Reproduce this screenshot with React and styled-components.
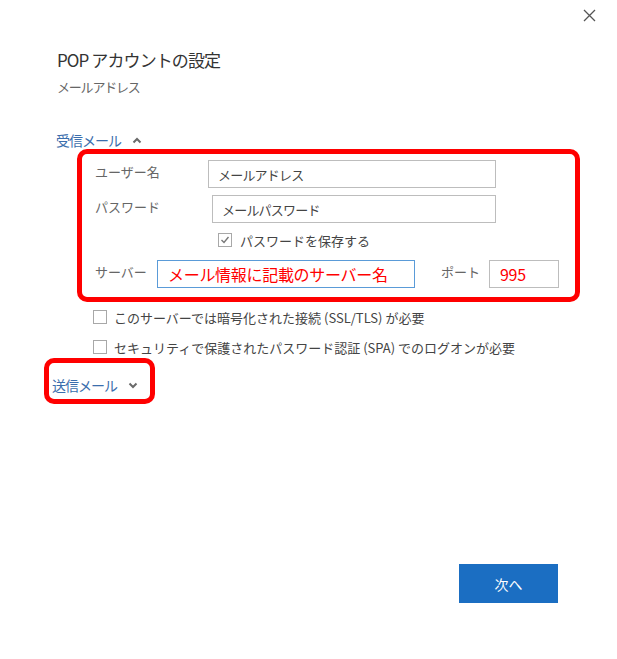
import styled, { createGlobalStyle } from "styled-components";

const GlobalStyle = createGlobalStyle`
  html, body {
    margin: 0;
    padding: 0;
    background: #fff;
  }
  body {
    font-family: "Noto Sans CJK JP", "Noto Sans", sans-serif;
    color: #333;
  }
`;

const Dialog = styled.div`
  width: 617px;
  height: 659px;
  display: flex;
  flex-direction: column;
  background: #fff;
`;

const TopBar = styled.div`
  display: flex;
  justify-content: flex-end;
  height: 30px;
  padding: 9px 21px 0 0;
  box-sizing: border-box;
`;

const CloseButton = styled.button`
  width: 13px;
  height: 13px;
  padding: 0;
  border: none;
  background: none;
  display: flex;
`;

const Body = styled.div`
  display: flex;
  flex-direction: column;
  align-items: flex-start;
  padding-left: 44px;
  flex: 1;
`;

const Title = styled.h1`
  margin: 18px 0 0 13px;
  font-size: 17px;
  line-height: 24px;
  font-weight: normal;
  letter-spacing: -0.9px;
  color: #333;
`;

const Subtitle = styled.div`
  margin: 6px 0 0 13px;
  font-size: 13px;
  line-height: 18px;
  letter-spacing: -1.2px;
  color: #666;
`;

const Toggle = styled.div`
  display: inline-flex;
  align-items: center;
  gap: 11px;
  font-size: 14px;
  line-height: 18px;
  letter-spacing: -1px;
  color: #3b6ead;
`;

const ReceiveToggle = styled(Toggle)`
  margin: 35px 0 0 12px;
`;

const Highlight = styled.div`
  border: 5px solid #ff0000;
  border-radius: 10px;
`;

const ServerBox = styled(Highlight)`
  margin-left: 33px;
  width: 503px;
  box-sizing: border-box;
  padding: 6px 0 9px 13px;
  display: flex;
  flex-direction: column;
  gap: 7px;
`;

const SendBox = styled(Highlight)`
  margin-top: 1px;
  padding: 9px 12px 3px 3px;
`;

const Row = styled.div`
  display: flex;
  align-items: center;
  height: 28px;
`;

const Label = styled.div`
  width: ${(p) => p.$w}px;
  padding-bottom: 6px;
  font-size: 13px;
  color: #666;
  flex-shrink: 0;
`;

const Field = styled.input`
  width: ${(p) => p.$w}px;
  height: 28px;
  box-sizing: border-box;
  border: 1px solid ${(p) => (p.$focus ? "#5a9bd8" : "#bdbdbd")};
  padding: 0 0 0 ${(p) => (p.$red ? 10 : 9)}px;
  margin: 0;
  font-family: inherit;
  font-size: ${(p) => (p.$red ? 16 : 13)}px;
  letter-spacing: ${(p) => (p.$red ? "-0.3px" : "-0.8px")};
  color: ${(p) => (p.$red ? "#ff0000" : "#444")};
  background: #fff;
  outline: none;
`;

const CheckRow = styled.label`
  display: flex;
  align-items: center;
  gap: ${(p) => p.$gap || 8}px;
  height: 20px;
  padding-left: ${(p) => p.$indent || 0}px;
  font-size: 13px;
  color: #444;
`;

const Box = styled.span`
  width: 14px;
  height: 14px;
  box-sizing: border-box;
  border: 1px solid #a8a8a8;
  display: flex;
  align-items: center;
  justify-content: center;
  background: #fff;
  flex-shrink: 0;
`;

const Options = styled.div`
  margin: 5px 0 0 49px;
  display: flex;
  flex-direction: column;
  gap: 10px;
`;

const Footer = styled.div`
  display: flex;
  justify-content: flex-end;
  padding: 0 59px 56px 0;
`;

const NextButton = styled.button`
  width: 99px;
  height: 39px;
  border: none;
  background: #1b6ec2;
  color: #fff;
  font-family: inherit;
  font-size: 14px;
`;

const Chevron = ({ up }) => (
  <svg width="10" height="7" viewBox="0 0 10 7">
    <polyline
      points={up ? "1.5,5.5 5,2 8.5,5.5" : "1.5,1.5 5,5 8.5,1.5"}
      fill="none"
      stroke="#6a6a6a"
      strokeWidth="2"
    />
  </svg>
);

const Checkbox = ({ checked }) => (
  <Box>
    {checked && (
      <svg width="10" height="10" viewBox="0 0 10 10">
        <polyline points="1.5,5 4,7.5 8.5,2" fill="none" stroke="#777" strokeWidth="1.4" />
      </svg>
    )}
  </Box>
);

const App = () => {
  return (
    <Dialog>
      <GlobalStyle />
      <TopBar>
        <CloseButton aria-label="閉じる">
          <svg width="13" height="13" viewBox="0 0 13 13">
            <path d="M1 1 L12 12 M12 1 L1 12" stroke="#555" strokeWidth="1.3" />
          </svg>
        </CloseButton>
      </TopBar>
      <Body>
        <Title>POP アカウントの設定</Title>
        <Subtitle>メールアドレス</Subtitle>
        <ReceiveToggle>
          受信メール <Chevron up />
        </ReceiveToggle>
        <ServerBox>
          <Row>
            <Label $w={113}>ユーザー名</Label>
            <Field $w={288} readOnly value="メールアドレス" />
          </Row>
          <Row>
            <Label $w={117}>パスワード</Label>
            <Field $w={284} readOnly value="メールパスワード" />
          </Row>
          <CheckRow $indent={123}>
            <Checkbox checked />
            パスワードを保存する
          </CheckRow>
          <Row style={{ marginTop: 3 }}>
            <Label $w={62}>サーバー</Label>
            <Field $w={258} $red $focus readOnly value="メール情報に記載のサーバー名" />
            <Label $w={48} style={{ marginLeft: 26 }}>ポート</Label>
            <Field $w={70} $red readOnly value="995" />
          </Row>
        </ServerBox>
        <Options>
          <CheckRow $gap={7}>
            <Checkbox />
            このサーバーでは暗号化された接続 (SSL/TLS) が必要
          </CheckRow>
          <CheckRow $gap={7}>
            <Checkbox />
            セキュリティで保護されたパスワード認証 (SPA) でのログオンが必要
          </CheckRow>
        </Options>
        <SendBox>
          <Toggle>
            送信メール <Chevron />
          </Toggle>
        </SendBox>
      </Body>
      <Footer>
        <NextButton>次へ</NextButton>
      </Footer>
    </Dialog>
  );
};

export default App;
